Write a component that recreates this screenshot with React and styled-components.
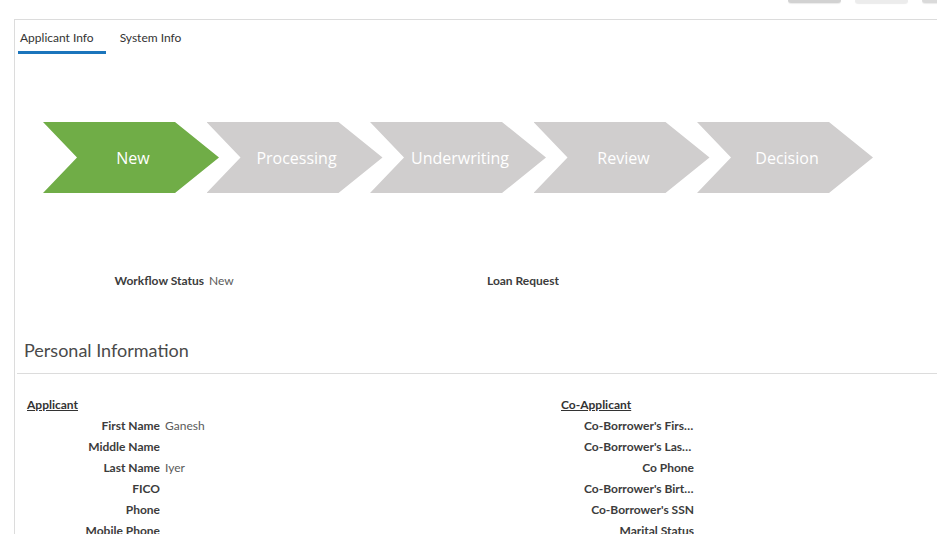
import React from "react";
import styled, { createGlobalStyle } from "styled-components";

const GlobalStyle = createGlobalStyle`
  html, body {
    margin: 0;
    padding: 0;
    background: #fff;
    font-family: Lato, "Liberation Sans", sans-serif;
    color: #333;
    overflow: hidden;
  }
`;

const stages = ["New", "Processing", "Underwriting", "Review", "Decision"];

const applicantRows = [
  { label: "First Name", value: "Ganesh" },
  { label: "Middle Name", value: "" },
  { label: "Last Name", value: "Iyer" },
  { label: "FICO", value: "" },
  { label: "Phone", value: "" },
  { label: "Mobile Phone", value: "" },
];

const coApplicantRows = [
  { label: "Co-Borrower's First Name", value: "" },
  { label: "Co-Borrower's Last Name", value: "" },
  { label: "Co Phone", value: "" },
  { label: "Co-Borrower's Birthdate", value: "" },
  { label: "Co-Borrower's SSN", value: "" },
  { label: "Marital Status", value: "" },
];

const App = () => {
  return (
    <>
      <GlobalStyle />
      <Toolbar>
        <ToolButton $width={53} $shade="#d2d2d2" />
        <ToolButton $width={53} $shade="#ececec" />
        <ToolButton $width={30} $shade="#dadada" />
      </Toolbar>
      <Panel>
        <Tabs>
          <Tab $active>Applicant Info</Tab>
          <Tab>System Info</Tab>
        </Tabs>

        <Path>
          {stages.map((s, i) => (
            <Chevron key={s} $active={i === 0}>
              {s}
            </Chevron>
          ))}
        </Path>

        <StatusGrid>
          <Field $labelWidth={110}>
            <Label>Workflow Status</Label>
            <Value>New</Value>
          </Field>
          <Field $labelWidth={110}>
            <Label>Loan Request</Label>
            <Value />
          </Field>
        </StatusGrid>

        <SectionTitle>Personal Information</SectionTitle>

        <Columns>
          <Column>
            <ColumnHeading>Applicant</ColumnHeading>
            {applicantRows.map((r) => (
              <Field key={r.label} $labelWidth={110}>
                <Label>{r.label}</Label>
                <Value>{r.value}</Value>
              </Field>
            ))}
          </Column>
          <Column>
            <ColumnHeading>Co-Applicant</ColumnHeading>
            {coApplicantRows.map((r) => (
              <Field key={r.label} $labelWidth={110}>
                <Label>{r.label}</Label>
                <Value>{r.value}</Value>
              </Field>
            ))}
          </Column>
        </Columns>
      </Panel>
    </>
  );
};

const Toolbar = styled.div`
  height: 19px;
  display: flex;
  justify-content: flex-end;
  align-items: flex-start;
  gap: 14px;
  margin-right: -15px;
`;

const ToolButton = styled.div`
  width: ${(p) => p.$width}px;
  height: 3px;
  background: ${(p) => p.$shade};
  border-radius: 0 0 3px 3px;
  box-shadow: 0 1px 1px rgba(0, 0, 0, 0.08);
`;

const Panel = styled.div`
  margin-left: 14px;
  border-left: 1px solid #dcdcdc;
  border-top: 1px solid #dcdcdc;
  min-height: 600px;
`;

const Tabs = styled.div`
  display: flex;
  padding-left: 3px;
`;

const Tab = styled.div`
  font-size: 12px;
  color: #333;
  padding: 10px 12px 6px 2px;
  margin-right: ${(p) => (p.$active ? "12px" : "0")};
  border-bottom: 3px solid ${(p) => (p.$active ? "#1b75bc" : "transparent")};
  line-height: 15px;
`;

const Path = styled.div`
  display: flex;
  margin-top: 68px;
  padding-left: 28px;
`;

const Chevron = styled.div`
  width: 176px;
  height: 71px;
  flex: none;
  display: flex;
  align-items: center;
  justify-content: center;
  padding-left: 4px;
  box-sizing: border-box;
  background: ${(p) => (p.$active ? "#70ad47" : "#d0cece")};
  color: #fff;
  font-family: "Open Sans", "Noto Sans", sans-serif;
  font-size: 16px;
  clip-path: polygon(0 0, 132px 0, 176px 50%, 132px 100%, 0 100%, 34px 50%);
  & + & {
    margin-left: -12.5px;
  }
`;

const StatusGrid = styled.div`
  display: grid;
  grid-template-columns: 355px 355px;
  margin-top: 77px;
  padding-left: 79px;
`;

const Field = styled.div`
  display: flex;
  align-items: baseline;
  height: 21px;
  font-size: 12px;
  line-height: 15px;
  & > :first-child {
    width: ${(p) => p.$labelWidth}px;
  }
`;

const Label = styled.div`
  flex: none;
  text-align: right;
  font-weight: 700;
  color: #3c3c3c;
  white-space: nowrap;
  overflow: hidden;
  text-overflow: ellipsis;
  padding-top: 3px;
`;

const Value = styled.div`
  padding-left: 5px;
  color: #5a5a5a;
`;

const SectionTitle = styled.h2`
  margin: 48px 0 0 2px;
  padding: 0 0 11px 7px;
  font-size: 18px;
  font-weight: 400;
  color: #4a4a4a;
  line-height: 23px;
  border-bottom: 1px solid #dcdcdc;
`;

const Columns = styled.div`
  display: grid;
  grid-template-columns: 534px 1fr;
  padding: 20px 0 0 12px;
`;

const Column = styled.div`
  display: flex;
  flex-direction: column;
  & > div:not(:first-child) {
    margin-left: 23px;
  }
`;

const ColumnHeading = styled.div`
  font-size: 12px;
  font-weight: 700;
  color: #333;
  text-decoration: underline;
  line-height: 15px;
  height: 21px;
  padding-top: 3px;
  box-sizing: border-box;
`;

export default App;
